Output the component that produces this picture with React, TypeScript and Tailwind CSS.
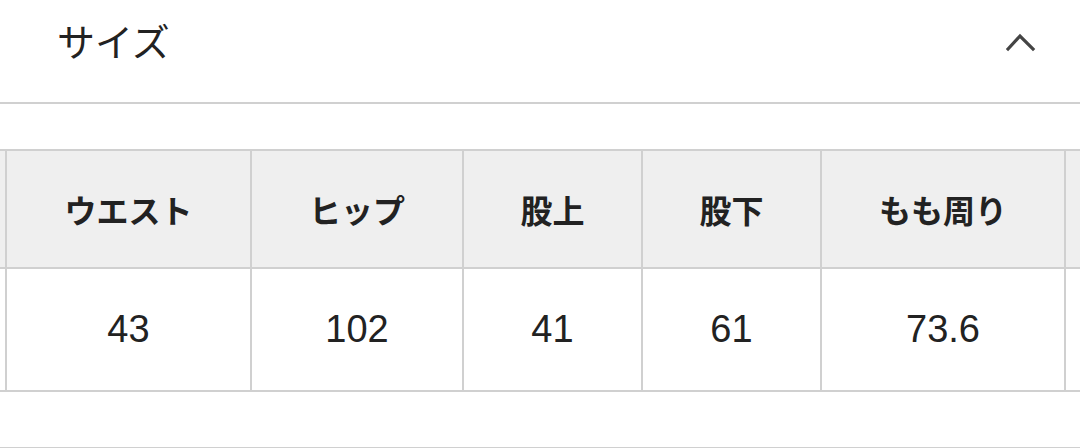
import React from 'react';

// first and last columns are scrolled out of view, so they stay empty
const columns = [
    { label: '', value: '', width: 'w-[200px]' },
    { label: 'ウエスト', value: '43', width: 'w-[245px]' },
    { label: 'ヒップ', value: '102', width: 'w-[212px]' },
    { label: '股上', value: '41', width: 'w-[179px]' },
    { label: '股下', value: '61', width: 'w-[179px]' },
    { label: 'もも周り', value: '73.6', width: 'w-[244px]' },
    { label: '', value: '', width: 'w-[200px]' },
];

const ChevronUp = () => (
    <svg width="30" height="22" viewBox="0 0 30 22" fill="none">
        <polyline
            points="2,18 14,5 27,18"
            stroke="#444"
            strokeWidth="3.2"
            strokeLinecap="square"
        />
    </svg>
);

export default function App() {
    return (
        <div className="w-[1080px] h-[448px] bg-white overflow-hidden font-['Liberation_Sans','Noto_Sans_CJK_JP',sans-serif] text-[#222]">
            {/* Accordion header */}
            <div className="h-[104px] flex items-center justify-between pl-[57px] pr-[44px] border-b-2 border-[#d0d0d0]">
                <span className="text-[38px] leading-none font-['Noto_Sans_CJK_JP',sans-serif] pb-[22px]">サイズ</span>
                <div className="pb-[18px]">
                    <ChevronUp />
                </div>
            </div>

            {/* Size table, scrolled horizontally */}
            <div className="mt-[45px] overflow-hidden">
                <table className="table-fixed border-collapse w-[1459px] ml-[-195px]">
                    <colgroup>
                        {columns.map((c, i) => (
                            <col key={i} className={c.width} />
                        ))}
                    </colgroup>
                    <thead>
                        <tr className="bg-[#efefef]">
                            {columns.map((c, i) => (
                                <th
                                    key={i}
                                    className="h-[118px] border-2 border-[#d0d0d0] text-center text-[32px] font-bold font-['Noto_Sans_CJK_JP',sans-serif] p-0"
                                >
                                    {c.label}
                                </th>
                            ))}
                        </tr>
                    </thead>
                    <tbody>
                        <tr>
                            {columns.map((c, i) => (
                                <td
                                    key={i}
                                    className="h-[123px] border-2 border-[#d0d0d0] text-center text-[38px] p-0"
                                >
                                    {c.value}
                                </td>
                            ))}
                        </tr>
                    </tbody>
                </table>
            </div>

            <div className="mt-[55px] border-t-2 border-[#d0d0d0]" />
        </div>
    );
}
